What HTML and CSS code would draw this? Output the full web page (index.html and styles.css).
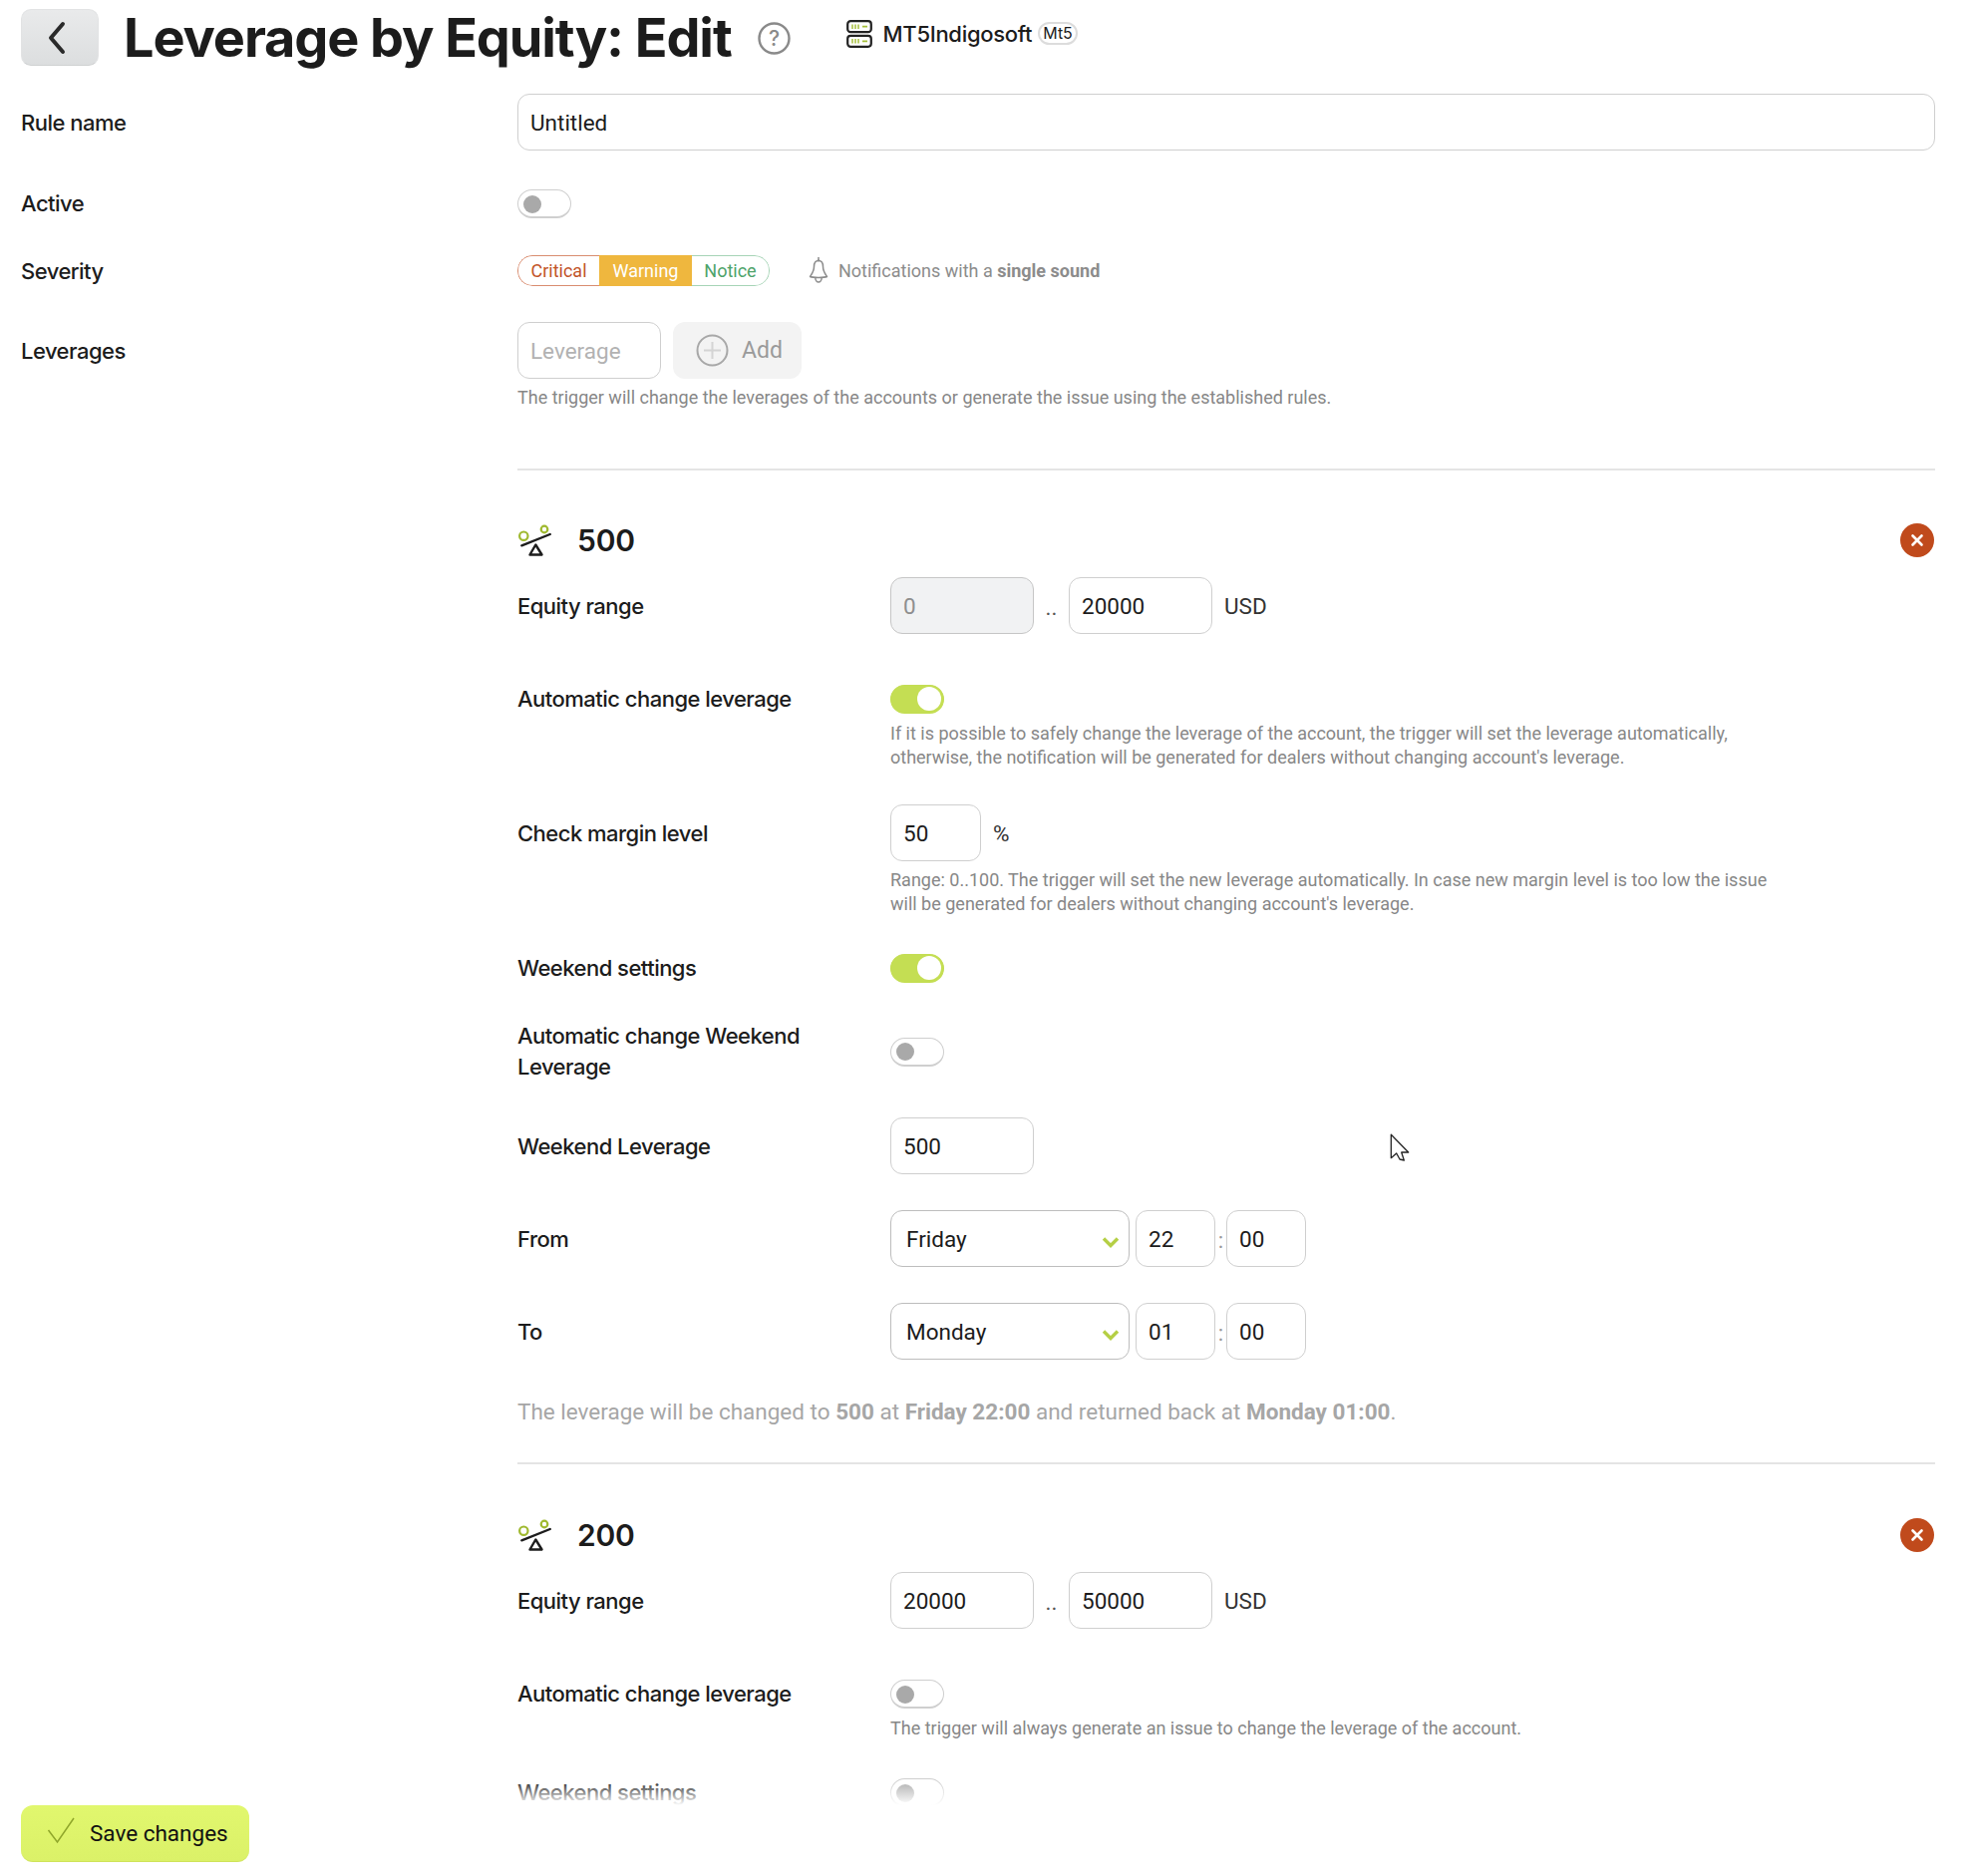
FILE: index.html
```html
<!DOCTYPE html>
<html lang="en">
<head>
<meta charset="utf-8">
<title>Leverage by Equity: Edit</title>
<link rel="stylesheet" href="styles.css">
</head>
<body>
<div class="page">
  <header class="top">
    <button class="back" type="button" aria-label="Back"><svg width="20" height="34" viewBox="0 0 20 34"><path d="M16 3 L4 17 L16 31" fill="none" stroke="#2a2a2a" stroke-width="4" stroke-linecap="round" stroke-linejoin="round"/></svg></button>
    <h1 class="title">Leverage by Equity: Edit</h1>
    <svg class="help" width="33" height="33" viewBox="0 0 33 33"><circle cx="16.500" cy="16.500" r="15" fill="none" stroke="#8a8a8a" stroke-width="2.400"/><text x="16.500" y="24" text-anchor="middle" class="help-q">?</text></svg>
    <div class="server">
      <svg width="26" height="28" viewBox="0 0 26 28"><rect x="1.200" y="1.200" width="23.600" height="11" rx="3" fill="#fff" stroke="#222" stroke-width="2.200"/><rect x="1.200" y="15.800" width="23.600" height="11" rx="3" fill="#fff" stroke="#222" stroke-width="2.200"/><path d="M6 4.500v4.500M9 4.500v4.500M12 4.500v4.500M6 19v4.500M9 19v4.500M12 19v4.500" stroke="#a5bf3a" stroke-width="1.500"/><path d="M16 6.700h5M16 21.300h5" stroke="#a5bf3a" stroke-width="1.800"/></svg>
      <span class="server-name">MT5Indigosoft</span>
      <span class="tag">Mt5</span>
    </div>
  </header>

  <div class="row row-top row-gap-39">
    <label class="lbl lbl-input">Rule name</label>
    <input class="inp inp-full" value="Untitled">
  </div>
  <div class="row row-top row-gap-37">
    <label class="lbl lbl-toggle">Active</label>
    <span class="toggle"><i class="knob"></i></span>
  </div>
  <div class="row row-top row-gap-36">
    <label class="lbl lbl-sev">Severity</label>
    <div class="sev-line">
      <div class="sev"><span class="sev-c">Critical</span><span class="sev-w">Warning</span><span class="sev-n">Notice</span></div>
      <svg class="bell" width="20" height="27" viewBox="0 0 20 27"><path d="M10 1v3.500M10 4.500c-2.800 0-4.500 2.300-4.500 6 0 4.500-2 7-4 10 2.500 1.200 14.500 1.200 17 0-2-3-4-5.500-4-10 0-3.700-1.700-6-4.500-6zM6.800 21.800c0 2.300 1.600 4.200 3.200 4.200s3.200-1.900 3.200-4.200" fill="none" stroke="#8c8c8c" stroke-width="1.500" stroke-linejoin="round"/></svg>
      <span class="sev-note">Notifications with a <b>single sound</b></span>
    </div>
  </div>
  <div class="row row-top">
    <label class="lbl lbl-input">Leverages</label>
    <div>
      <div class="add-line">
        <input class="inp inp-m" placeholder="Leverage">
        <button class="add" type="button"><svg width="33" height="33" viewBox="0 0 33 33"><circle cx="16.500" cy="16.500" r="15" fill="none" stroke="#a8a8a8" stroke-width="2"/><path d="M16.500 8v17M8 16.500h17" stroke="#d4d4d4" stroke-width="2"/></svg>Add</button>
      </div>
      <p class="hint hint-add">The trigger will change the leverages of the accounts or generate the issue using the established rules.</p>
    </div>
  </div>
  <hr class="sep sep-first">

  <section class="block">
    <div class="block-head">
      <svg width="34" height="32" viewBox="0 0 34 32"><circle cx="6.300" cy="11.700" r="4.200" fill="none" stroke="#9fb92f" stroke-width="2.200"/><circle cx="27" cy="5" r="3.300" fill="none" stroke="#9fb92f" stroke-width="2.200"/><path d="M4.300 21.300 L32.700 10" stroke="#1d1d1d" stroke-width="2.400" stroke-linecap="round"/><path d="M18.300 20.500 L24.500 30.500 H12.500 Z" fill="none" stroke="#1d1d1d" stroke-width="2.400" stroke-linejoin="round"/></svg>
      <span class="block-title">500</span>
      <span class="remove"><svg width="14" height="14" viewBox="0 0 14 14"><path d="M2.500 2.500l9 9M11.500 2.500l-9 9" stroke="#fff" stroke-width="2.600" stroke-linecap="round"/></svg></span>
    </div>
    <div class="sub gap-51">
      <label class="lbl lbl-input">Equity range</label>
      <div class="inline"><input class="inp inp-m inp-off" value="0"><span class="dots">..</span><input class="inp inp-m" value="20000"><span class="unit">USD</span></div>
    </div>
    <div class="sub gap-35">
      <label class="lbl lbl-toggle">Automatic change leverage</label>
      <div>
        <span class="toggle toggle-on"><i class="knob"></i></span>
        <p class="hint hint-wide hint-after-toggle">If it is possible to safely change the leverage of the account, the trigger will set the leverage automatically, otherwise, the notification will be generated for dealers without changing account's leverage.</p>
      </div>
    </div>
    <div class="sub gap-38">
      <label class="lbl lbl-input">Check margin level</label>
      <div>
        <div class="inline"><input class="inp inp-s" value="50"><span class="unit">%</span></div>
        <p class="hint hint-wide hint-after-input">Range: 0..100. The trigger will set the new leverage automatically. In case new margin level is too low the issue will be generated for dealers without changing account's leverage.</p>
      </div>
    </div>
    <div class="sub gap-38">
      <label class="lbl lbl-toggle">Weekend settings</label>
      <span class="toggle toggle-on"><i class="knob"></i></span>
    </div>
    <div class="sub sub-center gap-35">
      <label class="lbl lbl-two">Automatic change Weekend Leverage</label>
      <span class="toggle"><i class="knob"></i></span>
    </div>
    <div class="sub gap-36">
      <label class="lbl lbl-input">Weekend Leverage</label>
      <input class="inp inp-m" value="500">
    </div>
    <div class="sub gap-36">
      <label class="lbl lbl-input">From</label>
      <div class="inline">
        <div class="select">Friday<svg class="chev" width="18" height="12" viewBox="0 0 18 12"><path d="M2 2.500 L9 9.500 L16 2.500" fill="none" stroke="#b5cf45" stroke-width="3.400"/></svg></div>
        <input class="inp inp-t" value="22"><span class="colon">:</span><input class="inp inp-t" value="00">
      </div>
    </div>
    <div class="sub gap-36">
      <label class="lbl lbl-input">To</label>
      <div class="inline">
        <div class="select">Monday<svg class="chev" width="18" height="12" viewBox="0 0 18 12"><path d="M2 2.500 L9 9.500 L16 2.500" fill="none" stroke="#b5cf45" stroke-width="3.400"/></svg></div>
        <input class="inp inp-t" value="01"><span class="colon">:</span><input class="inp inp-t" value="00">
      </div>
    </div>
    <p class="summary">The leverage will be changed to <b>500</b> at <b>Friday 22:00</b> and returned back at <b>Monday 01:00</b>.</p>
  </section>
  <hr class="sep sep-second">

  <section class="block">
    <div class="block-head">
      <svg width="34" height="32" viewBox="0 0 34 32"><circle cx="6.300" cy="11.700" r="4.200" fill="none" stroke="#9fb92f" stroke-width="2.200"/><circle cx="27" cy="5" r="3.300" fill="none" stroke="#9fb92f" stroke-width="2.200"/><path d="M4.300 21.300 L32.700 10" stroke="#1d1d1d" stroke-width="2.400" stroke-linecap="round"/><path d="M18.300 20.500 L24.500 30.500 H12.500 Z" fill="none" stroke="#1d1d1d" stroke-width="2.400" stroke-linejoin="round"/></svg>
      <span class="block-title">200</span>
      <span class="remove"><svg width="14" height="14" viewBox="0 0 14 14"><path d="M2.500 2.500l9 9M11.500 2.500l-9 9" stroke="#fff" stroke-width="2.600" stroke-linecap="round"/></svg></span>
    </div>
    <div class="sub gap-51">
      <label class="lbl lbl-input">Equity range</label>
      <div class="inline"><input class="inp inp-m" value="20000"><span class="dots">..</span><input class="inp inp-m" value="50000"><span class="unit">USD</span></div>
    </div>
    <div class="sub gap-38">
      <label class="lbl lbl-toggle">Automatic change leverage</label>
      <div>
        <span class="toggle"><i class="knob"></i></span>
        <p class="hint hint-wide hint-after-toggle">The trigger will always generate an issue to change the leverage of the account.</p>
      </div>
    </div>
    <div class="sub gap-38">
      <label class="lbl lbl-toggle">Weekend settings</label>
      <span class="toggle"><i class="knob"></i></span>
    </div>
  </section>

  <div class="footer">
    <div class="fade"></div>
    <div class="solid"></div>
    <button class="save" type="button"><svg class="save-check" width="28" height="28" viewBox="0 0 28 28"><path d="M1.500 14 L10.500 26 L27 2" fill="none" stroke="#8fa62a" stroke-width="1.500"/></svg>Save changes</button>
  </div>

  <svg class="cursor" width="20" height="28" viewBox="0 0 20 28"><path d="M1.300 1.300 L1.300 24.700 L6.700 20 L10 26 L14.300 27 L11.700 19 L18.700 19 Z" fill="#fff" stroke="#222" stroke-width="1.300" stroke-linejoin="round"/></svg>
</div>
</body>
</html>
```
FILE: styles.css
```css
* { box-sizing: border-box; }
html, body { margin: 0; padding: 0; background: #fff; }
body { font-family: Roboto, "Liberation Sans", sans-serif; color: #1c1c1c; }

.page { position: relative; width: 1983px; height: 1882px; overflow: hidden; padding: 9px 42px 0 21px; }

.top { display: flex; align-items: center; height: 57px; margin-bottom: 28px; }
.back { width: 78px; height: 57px; border: 1px solid #e2e3e4; border-bottom-color: #cfd1d2; border-radius: 10px; background: linear-gradient(#e9eaeb, #dcdedf); display: flex; align-items: center; justify-content: center; padding: 0 6px 0 0; }
.title { margin: 0 0 0 25px; font: 700 54px/57px Inter, sans-serif; letter-spacing: -1.1px; color: #1c1c1c; }
.help { margin: 1px 0 0 26px; }
.help-q { font: 500 21px Inter, sans-serif; fill: #8a8a8a; }
.server { display: flex; align-items: center; margin: -8px 0 0 56px; }
.server-name { margin-left: 11px; font: 500 22px/28px Inter, sans-serif; letter-spacing: -0.3px; }
.tag { margin-left: 6px; padding: 0 3px; height: 23px; border: 2px solid #dcdcdc; border-radius: 12px; font: 400 16px/19px Inter, sans-serif; }

.row { display: grid; grid-template-columns: 498px 1fr; align-items: start; }
.row-gap-39 { margin-bottom: 39px; }
.row-gap-37 { margin-bottom: 37px; }
.row-gap-36 { margin-bottom: 36px; }

.lbl { display: block; font: 500 22px/29px Inter, sans-serif; letter-spacing: -0.52px; color: #1c1c1c; }
.lbl-input { height: 57px; line-height: 58px; }
.lbl-toggle { line-height: 29px; }
.lbl-sev { height: 31px; line-height: 32px; }
.lbl-two { line-height: 31px; }

.inp { display: block; height: 57px; border: 1px solid #cfcfcf; border-radius: 12px; background: #fff; padding: 1px 12px 0; font: 400 22.5px Roboto, sans-serif; color: #1c1c1c; outline: 0; }
.inp::placeholder { color: #b2b2b2; opacity: 1; }
.inp-full { width: 100%; }
.inp-m { width: 144px; }
.inp-s { width: 91px; }
.inp-t { width: 80px; }
.inp-off { background: #f1f2f3; color: #8e8e8e; border-color: #c6c6c6; }

.toggle { display: block; position: relative; width: 54px; height: 29px; border: 1.500px solid #cfcfcf; border-bottom-width: 2px; border-radius: 15px; background: #fff; }
.knob { position: absolute; left: 5px; top: 4.500px; width: 18px; height: 18px; border-radius: 50%; background: #a9a9a9; }
.toggle-on { background: #c4de53; border-color: #c4de53; }
.toggle-on .knob { left: 26px; top: 1px; width: 24px; height: 24px; background: #fff; }

.sev-line { display: flex; align-items: center; height: 31px; }
.sev { display: flex; height: 31px; width: 253px; border-radius: 15px; overflow: hidden; font: 400 18px/29px Roboto, sans-serif; }
.sev span { display: block; text-align: center; }
.sev-c { width: 82px; color: #c2542a; border: 1px solid #d98d70; border-right: 0; border-radius: 15px 0 0 15px; }
.sev-w { width: 93px; color: #fff; background: #efb73e; line-height: 31px; }
.sev-n { width: 78px; color: #4ea36a; border: 1px solid #a6d4b6; border-left: 0; border-radius: 0 15px 15px 0; }
.bell { margin: -3px 0 0 39px; }
.sev-note { margin-left: 10px; font: 400 18px/24px Roboto, sans-serif; color: #8c8c8c; }
.sev-note b { font-weight: 700; }

.add-line { display: flex; gap: 12px; }
.add { display: flex; align-items: center; gap: 13px; width: 129px; height: 57px; padding: 0 0 0 23px; border: 0; border-radius: 12px; background: #f3f3f3; font: 400 23px Roboto, sans-serif; color: #9a9a9a; }

.hint { margin: 0; font: 400 18px/24px Roboto, sans-serif; color: #878787; }
.hint-add { margin-top: 7px; }
.hint-wide { width: 890px; }
.hint-after-toggle { margin-top: 8px; }
.hint-after-input { margin-top: 7px; }

.sep { height: 2px; margin: 0 0 0 498px; border: 0; background: #e4e4e4; }
.sep-first { margin-top: 59px; margin-bottom: 53px; }
.sep-second { margin-top: 35px; margin-bottom: 54px; }

.block { margin-left: 498px; }
.block-head { display: flex; align-items: center; height: 34px; margin-bottom: 20px; }
.block-title { margin-left: 26px; font: 600 30px/34px Inter, sans-serif; letter-spacing: -0.2px; color: #1c1c1c; }
.remove { margin-left: auto; margin-right: 1px; width: 34px; height: 34px; border-radius: 50%; background: #c04a1c; display: flex; align-items: center; justify-content: center; }

.sub { display: grid; grid-template-columns: 374px 1fr; align-items: start; }
.sub-center { align-items: center; }
.gap-51 { margin-bottom: 51px; }
.gap-35 { margin-bottom: 35px; }
.gap-38 { margin-bottom: 38px; }
.gap-36 { margin-bottom: 36px; }

.inline { display: flex; align-items: center; }
.dots { width: 35px; padding-top: 2px; text-align: center; font-size: 22.5px; color: #555; }
.unit { margin-left: 12px; font-size: 22.5px; color: #333; }
.colon { width: 11px; padding-top: 2px; text-align: center; font-size: 22.5px; color: #999; }

.select { position: relative; width: 240px; height: 57px; margin-right: 6px; padding-left: 15px; border: 1px solid #bdbdbd; border-radius: 12px; font-size: 22.5px; line-height: 56px; }
.chev { position: absolute; right: 9px; top: 25px; }

.summary { margin: 0; font: 400 22.5px/32px Roboto, sans-serif; color: #a6a6a6; }
.summary b { font-weight: 700; }

.footer { position: absolute; left: 0; right: 0; bottom: 0; height: 97px; }
.fade { height: 26px; background: linear-gradient(rgba(255,255,255,0), #fff); }
.solid { height: 71px; background: #fff; }
.save { position: absolute; left: 21px; top: 26px; display: flex; align-items: center; gap: 15px; width: 229px; height: 57px; padding: 0 0 0 26px; border: 0; border-bottom: 1px solid #cfe35a; border-radius: 12px; background: linear-gradient(#e1f76e, #dbf168); font: 400 22.5px Roboto, sans-serif; color: #111; }
.save-check { margin-top: -7px; }

.cursor { position: absolute; left: 1394px; top: 1137px; }
```
